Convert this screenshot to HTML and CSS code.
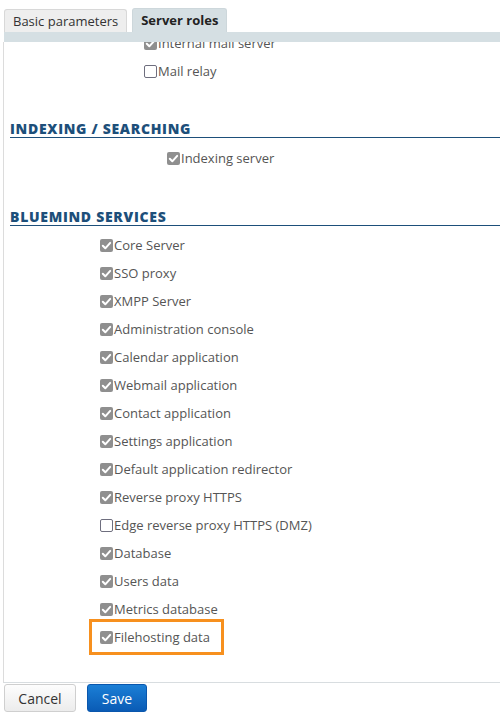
FILE: index.html
```html
<!DOCTYPE html>
<html lang="en">
<head>
    <meta charset="UTF-8">
    <meta name="viewport" content="width=device-width, initial-scale=1.0">
    <title>Server roles</title>
    <link rel="stylesheet" href="styles.css">
</head>
<body>
    <div class="tabs">
        <div class="tab">Basic parameters</div>
        <div class="tab active">Server roles</div>
    </div>
    <div class="tab-bar"></div>

    <div class="panel">
        <div class="panel-inner">
            <div class="group group-mail">
                <div class="role"><span class="box checked"></span>Internal mail server</div>
                <div class="role"><span class="box"></span>Mail relay</div>
            </div>

            <h2 class="section-title">INDEXING / SEARCHING</h2>
            <div class="group group-index">
                <div class="role"><span class="box checked"></span>Indexing server</div>
            </div>

            <h2 class="section-title">BLUEMIND SERVICES</h2>
            <div class="group group-services">
                <div class="role"><span class="box checked"></span>Core Server</div>
                <div class="role"><span class="box checked"></span>SSO proxy</div>
                <div class="role"><span class="box checked"></span>XMPP Server</div>
                <div class="role"><span class="box checked"></span>Administration console</div>
                <div class="role"><span class="box checked"></span>Calendar application</div>
                <div class="role"><span class="box checked"></span>Webmail application</div>
                <div class="role"><span class="box checked"></span>Contact application</div>
                <div class="role"><span class="box checked"></span>Settings application</div>
                <div class="role"><span class="box checked"></span>Default application redirector</div>
                <div class="role"><span class="box checked"></span>Reverse proxy HTTPS</div>
                <div class="role"><span class="box"></span>Edge reverse proxy HTTPS (DMZ)</div>
                <div class="role"><span class="box checked"></span>Database</div>
                <div class="role"><span class="box checked"></span>Users data</div>
                <div class="role"><span class="box checked"></span>Metrics database</div>
                <div class="role highlight"><span class="box checked"></span>Filehosting data</div>
            </div>
        </div>
    </div>

    <div class="actions">
        <button class="btn">Cancel</button>
        <button class="btn primary">Save</button>
    </div>
</body>
</html>
```

FILE: styles.css
```css
body {
    margin: 0;
    font-family: "Open Sans", "Liberation Sans", sans-serif;
    font-size: 13px;
    color: #555;
    background: #fff;
}
.tabs {
    display: flex;
    align-items: flex-end;
    gap: 5px;
    padding: 8px 0 0 4px;
}
.tab {
    height: 22px;
    line-height: 22px;
    padding: 0 8px;
    background: #eeeeee;
    border: 1px solid #d8d8d8;
    border-bottom: none;
    border-radius: 3px 3px 0 0;
    color: #333;
}
.tab.active {
    height: 23px;
    background: #d5dfe3;
    border-color: #cdd7db;
    font-weight: 700;
    color: #222;
}
.tab-bar {
    height: 10px;
    margin-left: 4px;
    background: #d5dfe3;
}
.panel {
    height: 640px;
    margin-left: 3px;
    border-left: 1px solid #dcdcdc;
    border-bottom: 1px solid #d8dde0;
    overflow: hidden;
}
.panel-inner {
    margin-top: -13px;
}
.role {
    display: flex;
    align-items: center;
    height: 28px;
    white-space: nowrap;
}
.group-mail { padding-left: 140px; }
.group-index { padding-left: 163px; margin-top: 6px; }
.group-services { padding-left: 96px; margin-top: 5px; }
.box {
    box-sizing: border-box;
    width: 13px;
    height: 13px;
    margin-right: 1px;
    border: 1.5px solid #6e6e7e;
    border-radius: 2px;
    background: #fff;
}
.box.checked {
    border: none;
    background: #8f8f8f url("data:image/svg+xml,%3Csvg xmlns='http://www.w3.org/2000/svg' viewBox='0 0 13 13'%3E%3Cpath d='M2.8 6.8l2.5 2.5 4.9-5.4' fill='none' stroke='%23fff' stroke-width='2' stroke-linecap='round' stroke-linejoin='round'/%3E%3C/svg%3E") no-repeat center;
}
.section-title {
    margin: 35px 0 0 6px;
    font-size: 14px;
    line-height: 17px;
    font-weight: 800;
    letter-spacing: 0.7px;
    color: #1d4f7a;
    border-bottom: 1px solid #1d4f7a;
}
.group-index + .section-title { margin-top: 36px; }
.role.highlight {
    display: inline-flex;
    box-sizing: border-box;
    height: 36px;
    width: 135px;
    margin: -4px 0 0 -11px;
    padding-left: 8px;
    border: 3px solid #f7901e;
}
.actions {
    display: flex;
    gap: 11px;
    padding: 1px 0 0 4px;
}
.btn {
    height: 28px;
    padding: 0;
    border-radius: 3px;
    font-family: "Open Sans", "Liberation Sans", sans-serif;
    font-size: 14px;
    cursor: pointer;
}
.btn:first-child {
    width: 72px;
    color: #333;
    background: linear-gradient(#fdfdfd, #ececec);
    border: 1px solid #cfcfcf;
}
.btn.primary {
    width: 60px;
    color: #fff;
    background: linear-gradient(#1b7fd6, #0a5bb5);
    border: 1px solid #0a57ad;
}
```
